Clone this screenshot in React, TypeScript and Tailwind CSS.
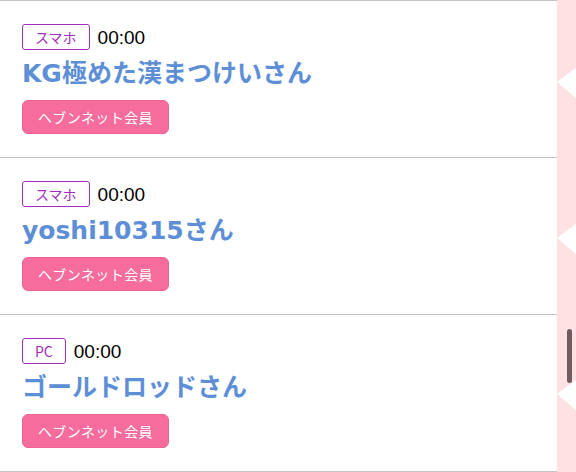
const members = [
  { id: 1, device: 'スマホ', time: '00:00', name: 'KG極めた漢まつけいさん' },
  { id: 2, device: 'スマホ', time: '00:00', name: 'yoshi10315さん' },
  { id: 3, device: 'PC', time: '00:00', name: 'ゴールドロッドさん' },
]

function MemberRow({ device, time, name }: { device: string; time: string; name: string }) {
  return (
    <div className="border-b border-[#c4c4c4] pl-[22px] pt-[23px] pb-[23px]">
      <div className="flex h-[26px] items-center gap-[8px]">
        <span className="flex h-[26px] items-center rounded-[3px] border border-[#a22cc0] px-[12px] text-[14px] leading-none text-[#a22cc0]">
          {device}
        </span>
        <span
          className="text-[19px] leading-none text-black"
          style={{ fontFamily: '"Liberation Sans", "Noto Sans CJK JP", sans-serif' }}
        >
          {time}
        </span>
      </div>
      <div
        className="mt-[6px] h-[36px] text-[25px] font-bold leading-[36px] text-[#5d8fd6]"
        style={{ fontFamily: '"DejaVu Sans", "Noto Sans CJK JP", sans-serif' }}
      >
        {name}
      </div>
      <button
        type="button"
        className="mt-[8px] flex h-[34px] w-[147px] items-center justify-center rounded-[6px] border border-[#ee6294] bg-[#f66c9c] text-[14px] tracking-[0.03em] text-white"
      >
        ヘブンネット会員
      </button>
    </div>
  )
}

export default function App() {
  return (
    <div
      className="relative flex h-[472px] w-[576px] overflow-hidden bg-white"
      style={{ fontFamily: '"Noto Sans CJK JP", "Noto Sans", sans-serif' }}
    >
      {/* List */}
      <div className="w-[557px] border-t border-[#c4c4c4]">
        {members.map((m) => (
          <MemberRow key={m.id} device={m.device} time={m.time} name={m.name} />
        ))}
      </div>

      {/* Decorative side strip */}
      <svg width="19" height="472" viewBox="0 0 19 472" className="shrink-0">
        <rect width="19" height="472" fill="#ffe1e4" />
        <polygon points="0,82 19,68 19,98" fill="#ffffff" />
        <polygon points="0,238 19,224 19,254" fill="#ffffff" />
        <polygon points="0,394 19,380 19,410" fill="#ffffff" />
      </svg>

      {/* Scrollbar thumb */}
      <div className="absolute left-[567px] top-[329px] h-[54px] w-[5px] rounded-full bg-[#6e5c60]" />
    </div>
  )
}
